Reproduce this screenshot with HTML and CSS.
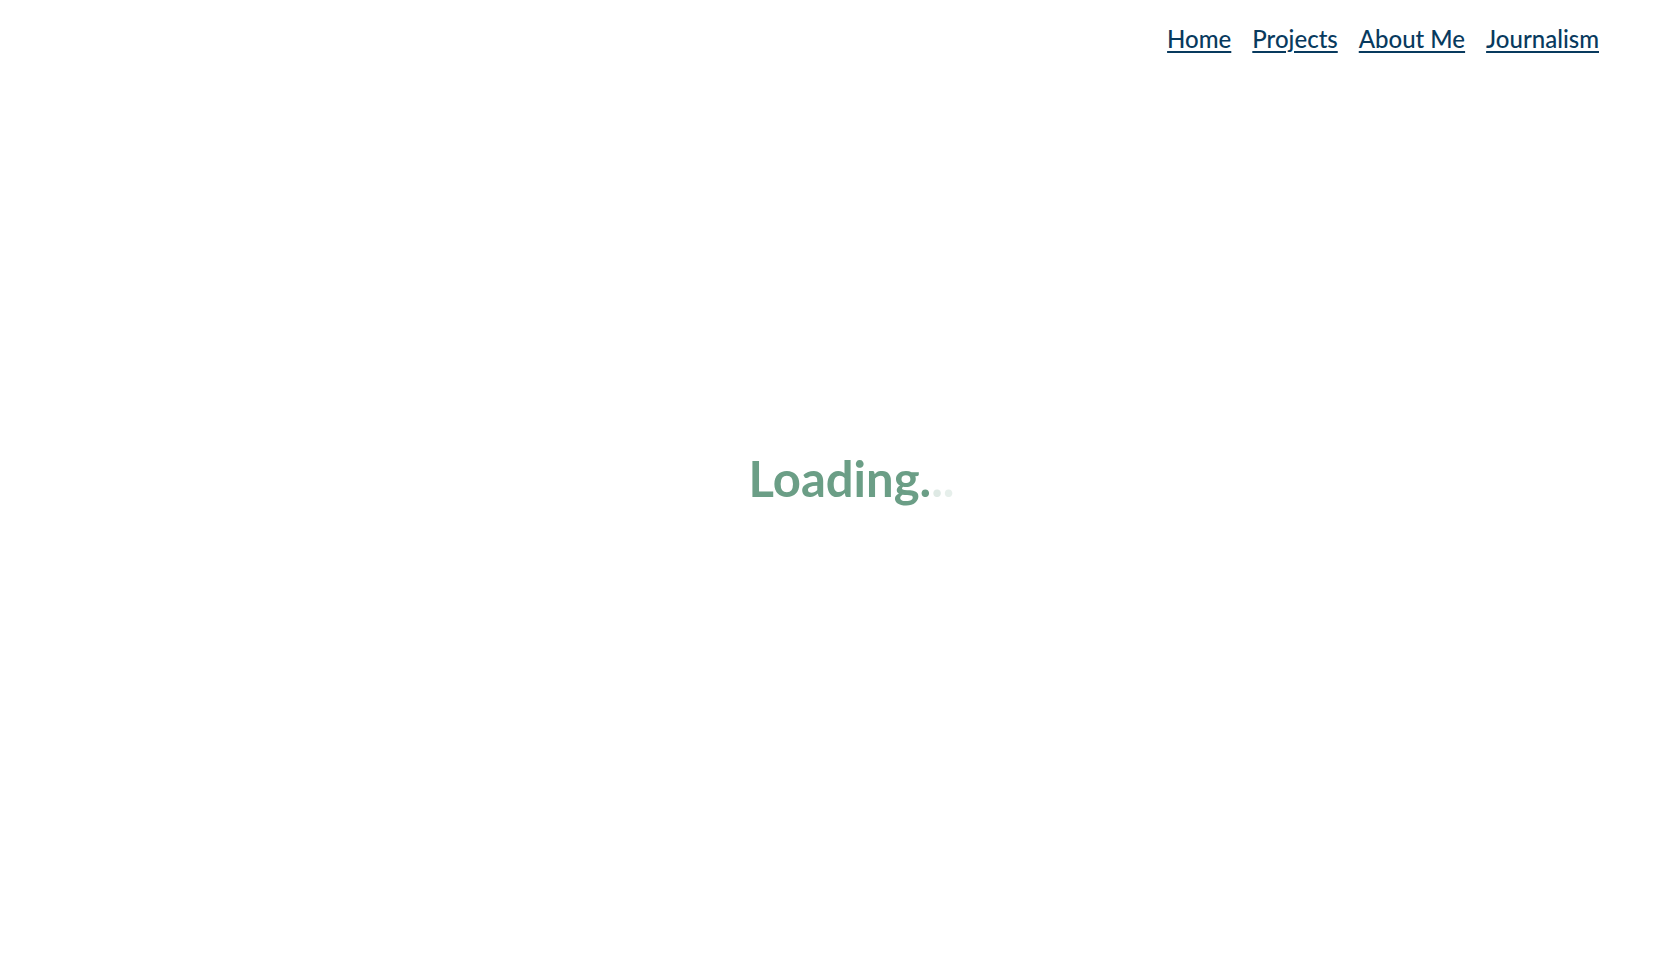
FILE: index.html
```html
<!DOCTYPE html>
<html lang="en">
<head>
<meta charset="utf-8">
<title>Loading</title>
<link rel="stylesheet" href="styles.css">
</head>
<body>
<header class="site-header">
  <nav class="nav">
    <a class="nav-link" href="#">Home</a>
    <a class="nav-link" href="#">Projects</a>
    <a class="nav-link" href="#">About Me</a>
    <a class="nav-link" href="#">Journalism</a>
  </nav>
</header>
<main class="loading-wrap">
  <div class="loading">Loading<span class="dot d1">.</span><span class="dot d2">.</span><span class="dot d3">.</span></div>
</main>
</body>
</html>
```

FILE: styles.css
```css
html, body {
  margin: 0;
  padding: 0;
  background: #ffffff;
  height: 100%;
}
body {
  font-family: "Lato", "Open Sans", sans-serif;
  display: flex;
  flex-direction: column;
}
.site-header {
  display: flex;
  justify-content: flex-end;
  padding: 24px 66px 0 0;
}
.nav {
  display: flex;
  gap: 21px;
}
.nav-link {
  color: #083a5e;
  font-size: 24px;
  font-weight: 500;
  text-decoration: underline;
  text-decoration-thickness: 2px;
  text-underline-offset: 3px;
}
.loading-wrap {
  flex: 1;
  display: flex;
  justify-content: center;
  padding-top: 401px;
}
.loading {
  color: #6b9e86;
  font-size: 49px;
  font-weight: 700;
  line-height: 1;
  padding-left: 38px;
}
.dot { color: #6b9e86; }
.d2 { opacity: 0.22; }
.d3 { opacity: 0.16; }
```
